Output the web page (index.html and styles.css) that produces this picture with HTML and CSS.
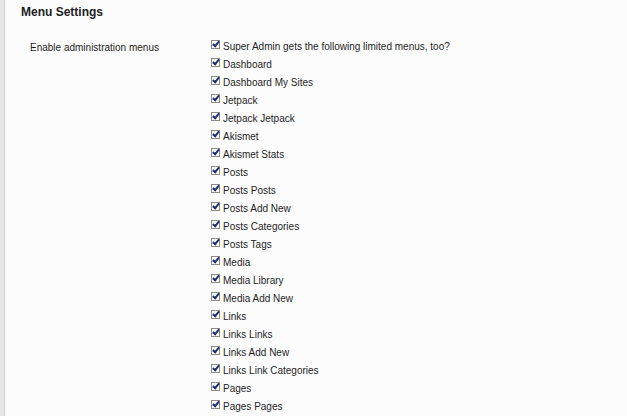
FILE: index.html
```html
<!DOCTYPE html>
<html>
<head>
<meta charset="utf-8">
<link rel="stylesheet" href="styles.css">
</head>
<body>
<div class="page">
  <div class="rail"></div>
  <div class="content">
    <h3 class="title">Menu Settings</h3>
    <div class="row">
      <div class="label">Enable administration menus</div>
      <div class="options">
        <label class="opt"><span class="cb"></span>Super Admin gets the following limited menus, too?</label>
        <label class="opt"><span class="cb"></span>Dashboard</label>
        <label class="opt"><span class="cb"></span>Dashboard My Sites</label>
        <label class="opt"><span class="cb"></span>Jetpack</label>
        <label class="opt"><span class="cb"></span>Jetpack Jetpack</label>
        <label class="opt"><span class="cb"></span>Akismet</label>
        <label class="opt"><span class="cb"></span>Akismet Stats</label>
        <label class="opt"><span class="cb"></span>Posts</label>
        <label class="opt"><span class="cb"></span>Posts Posts</label>
        <label class="opt"><span class="cb"></span>Posts Add New</label>
        <label class="opt"><span class="cb"></span>Posts Categories</label>
        <label class="opt"><span class="cb"></span>Posts Tags</label>
        <label class="opt"><span class="cb"></span>Media</label>
        <label class="opt"><span class="cb"></span>Media Library</label>
        <label class="opt"><span class="cb"></span>Media Add New</label>
        <label class="opt"><span class="cb"></span>Links</label>
        <label class="opt"><span class="cb"></span>Links Links</label>
        <label class="opt"><span class="cb"></span>Links Add New</label>
        <label class="opt"><span class="cb"></span>Links Link Categories</label>
        <label class="opt"><span class="cb"></span>Pages</label>
        <label class="opt"><span class="cb"></span>Pages Pages</label>
      </div>
    </div>
  </div>
</div>
</body>
</html>
```
FILE: styles.css
```css
html, body {
  margin: 0;
  padding: 0;
  background: #fcfcfc;
  height: 100%;
  overflow: hidden;
}
.page {
  display: flex;
  min-height: 416px;
  font-family: "Liberation Sans", Arial, sans-serif;
  color: #1e1e1e;
}
.rail {
  width: 4px;
  background: #e6e6e6;
  border-right: 1px solid #cfcfcf;
  flex: none;
}
.content {
  flex: 1;
  padding-left: 16px;
}
.title {
  margin: 0;
  padding-top: 5px;
  font-size: 12px;
  line-height: 15px;
  font-weight: bold;
  color: #222;
}
.row {
  display: flex;
  padding-top: 17px;
  font-size: 10px;
}
.label {
  width: 181px;
  padding-left: 9px;
  line-height: 18px;
  margin-top: 2px;
}
.options {
  display: flex;
  flex-direction: column;
}
.opt {
  display: flex;
  align-items: center;
  box-sizing: border-box;
  height: 18px;
  line-height: 16px;
  padding-top: 2px;
}
.cb {
  width: 7px;
  height: 7px;
  border: 1px solid #8a8a8a;
  background: #fff;
  margin-right: 3px;
  margin-top: -6px;
  position: relative;
  flex: none;
}
.cb::after {
  content: "";
  position: absolute;
  left: 2px;
  top: -1px;
  width: 2px;
  height: 5px;
  border-right: 2px solid #1e2f6e;
  border-bottom: 2px solid #1e2f6e;
  transform: rotate(40deg);
}
```
